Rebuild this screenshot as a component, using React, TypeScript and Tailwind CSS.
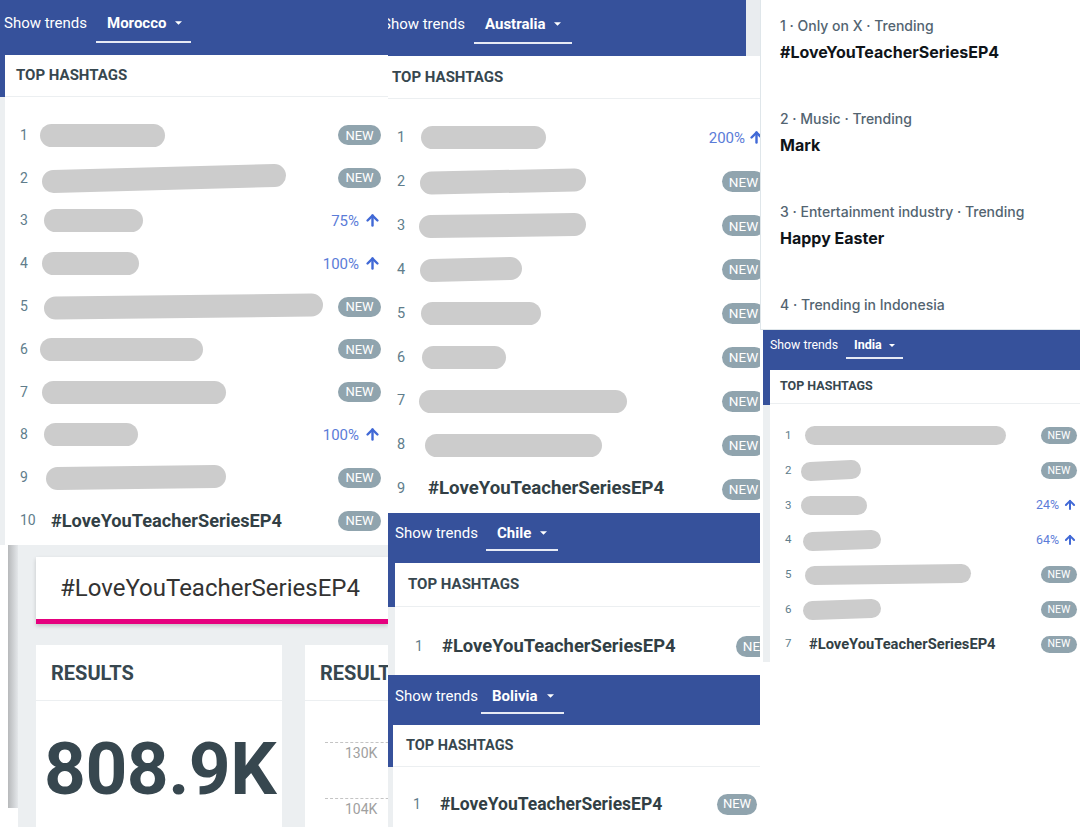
import { ArrowUp } from 'lucide-react';

type Item = { bar?: [number, number, number?]; tag?: string; pct?: string };

type RowCls = {
  row: string;
  num: string;
  tag: string;
  badge: string;
  pct: string;
  arrow: number;
  barH: number;
};

const TAG = '#LoveYouTeacherSeriesEP4';

const morocco: Item[] = [
  { bar: [-11, 125] },
  { bar: [-9, 244, 6] },
  { bar: [-7, 99], pct: '75%' },
  { bar: [-9, 97], pct: '100%' },
  { bar: [-7, 279, 3] },
  { bar: [-11, 163] },
  { bar: [-9, 184] },
  { bar: [-7, 94], pct: '100%' },
  { bar: [-5, 180, 2] },
  { tag: TAG },
];

const australia: Item[] = [
  { bar: [-7, 125], pct: '200%' },
  { bar: [-8, 166, 3] },
  { bar: [-9, 167, 2] },
  { bar: [-8, 102, 2] },
  { bar: [-7, 120] },
  { bar: [-6, 84] },
  { bar: [-9, 208] },
  { bar: [-3, 177] },
  { tag: TAG },
];

const india: Item[] = [
  { bar: [-4, 201] },
  { bar: [-8, 60, 2] },
  { bar: [-8, 66], pct: '24%' },
  { bar: [-6, 78, 2], pct: '64%' },
  { bar: [-4, 166, 2] },
  { bar: [-6, 78, 2] },
  { tag: TAG },
];

const xTrends = [
  { cat: '1 · Only on X · Trending', name: TAG },
  { cat: '2 · Music · Trending', name: 'Mark' },
  { cat: '3 · Entertainment industry · Trending', name: 'Happy Easter' },
  { cat: '4 · Trending in Indonesia' },
];

const lgMorocco: RowCls = {
  row: 'h-[42.8px] pl-[15px] pr-[7px]',
  num: 'w-[31px] text-[14px]',
  tag: 'text-[18.2px]',
  badge: 'h-[20px] w-[43px] text-[13px]',
  pct: 'text-[15px] gap-[5px]',
  arrow: 17,
  barH: 23,
};

const lgAustralia: RowCls = {
  row: 'h-[43.9px] pl-[9px]',
  num: 'w-[31px] text-[14.5px]',
  tag: 'text-[18.6px]',
  badge: 'h-[21px] w-[43px] text-[13.5px]',
  pct: 'text-[15px] gap-[3px]',
  arrow: 17,
  barH: 23,
};

const mdChile: RowCls = {
  row: 'h-[44px] pl-[20px]',
  num: 'w-[27px] text-[14px]',
  tag: 'text-[18.4px]',
  badge: 'h-[21px] w-[43px] text-[13.5px]',
  pct: 'text-[15px]',
  arrow: 17,
  barH: 23,
};

const mdBolivia: RowCls = {
  row: 'h-[44px] pl-[20px] pr-[3px]',
  num: 'w-[27px] text-[14px]',
  tag: 'text-[17.5px]',
  badge: 'h-[21px] w-[40px] text-[13px]',
  pct: 'text-[15px]',
  arrow: 17,
  barH: 23,
};

const smIndia: RowCls = {
  row: 'h-[34.7px] pl-[15px] pr-[3px]',
  num: 'w-[24px] text-[11.5px]',
  tag: 'text-[14.7px]',
  badge: 'h-[17px] w-[36px] text-[10.5px]',
  pct: 'text-[12.4px] gap-[4px]',
  arrow: 14,
  barH: 19,
};

function Caret({ className = '' }: { className?: string }) {
  return (
    <svg viewBox="0 0 8 4" className={className}>
      <path d="M0 0h8L4 4z" fill="currentColor" />
    </svg>
  );
}

// redaction scribble drawn over the hashtag name
function Bar({ x, w, tilt = 0, h }: { x: number; w: number; tilt?: number; h: number }) {
  const H = h + 8;
  return (
    <svg width={w} height={H} style={{ marginLeft: x }} className="shrink-0 overflow-visible">
      <line
        x1={h / 2}
        y1={H / 2 + tilt / 2}
        x2={w - h / 2}
        y2={H / 2 - tilt / 2}
        stroke="#cccccc"
        strokeWidth={h}
        strokeLinecap="round"
      />
    </svg>
  );
}

function ShowTrends({
  country,
  wrap,
  label,
  dd,
  caret,
}: {
  country: string;
  wrap: string;
  label: string;
  dd: string;
  caret: string;
}) {
  return (
    <div className={`flex shrink-0 items-start bg-[#36519b] text-white ${wrap}`}>
      <span className={`whitespace-nowrap ${label}`}>Show trends</span>
      <span className={`flex items-center whitespace-nowrap border-b-2 border-[#e6eaf5] font-bold ${dd}`}>
        {country}
        <Caret className={caret} />
      </span>
    </div>
  );
}

function CardTitle({ cls }: { cls: string }) {
  return (
    <div className={`flex items-center border-b border-[#eceff1] font-bold text-[#37474f] ${cls}`}>
      TOP HASHTAGS
    </div>
  );
}

function TrendRow({ n, item, c }: { n: number; item: Item; c: RowCls }) {
  return (
    <div className={`flex items-center ${c.row}`}>
      <span className={`shrink-0 text-[#607d8b] ${c.num}`}>{n}</span>
      <div className="flex min-w-0 flex-1 items-center">
        {item.tag ? (
          <span className={`whitespace-nowrap font-bold text-[#323f45] ${c.tag}`}>{item.tag}</span>
        ) : item.bar ? (
          <Bar x={item.bar[0]} w={item.bar[1]} tilt={item.bar[2]} h={c.barH} />
        ) : null}
      </div>
      {item.pct ? (
        <span className={`flex shrink-0 items-center text-[#5b7cd8] ${c.pct}`}>
          {item.pct}
          <ArrowUp size={c.arrow} strokeWidth={3.4} className="text-[#4169d6]" />
        </span>
      ) : (
        <span className={`flex shrink-0 items-center justify-center rounded-full bg-[#90a4ae] text-white ${c.badge}`}>
          NEW
        </span>
      )}
    </div>
  );
}

function Results() {
  return (
    <div className="flex h-[282px] shrink-0 bg-white">
      <div className="ml-[8px] h-[263px] w-[10px] shrink-0 bg-linear-to-r from-[#b7b9bb] to-[#e4e7ea]" />
      <div className="min-w-0 flex-1 bg-[#eceff1] pl-[18px] pt-[12px]">
        <div className="flex h-[67px] items-center border-b-[5px] border-[#e5007e] bg-white pl-[24px] shadow-[0_2px_4px_rgba(0,0,0,0.18)]">
          <span className="whitespace-nowrap text-[24px] text-[#333333]">{TAG}</span>
        </div>
        <div className="mt-[21px] flex gap-[23px]">
          <div className="h-[200px] w-[246px] shrink-0 bg-white">
            <div className="flex h-[56px] items-center border-b border-[#eceff1] pl-[15px] text-[20px] font-bold text-[#37474f]">
              RESULTS
            </div>
            <div className="pl-[8px] pt-[32px] text-[73px] font-bold leading-none tracking-[-0.5px] text-[#37474f]">
              808.9K
            </div>
          </div>
          <div className="h-[200px] w-[200px] shrink-0 bg-white">
            <div className="flex h-[56px] items-center border-b border-[#eceff1] pl-[15px] text-[20px] font-bold text-[#37474f]">
              RESULTS
            </div>
            <div className="pl-[20px] pt-[41px] text-[14px] leading-[16px] text-[#a0a0a0]">
              <div className="border-t border-dashed border-[#c4c4c4]" />
              <div className="mt-[2px] pl-[20px]">130K</div>
              <div className="mt-[37px] border-t border-dashed border-[#c4c4c4]" />
              <div className="mt-[2px] pl-[20px]">104K</div>
            </div>
          </div>
        </div>
      </div>
    </div>
  );
}

export default function App() {
  return (
    <div className="grid h-[827px] w-[1080px] grid-cols-[388px_372px_320px] overflow-hidden bg-white [font-family:Roboto,sans-serif]">
      {/* column 1 */}
      <div className="flex flex-col overflow-hidden">
        <div className="h-[545px] shrink-0 overflow-hidden bg-[linear-gradient(#36519b_97px,#eceff1_97px)]">
          <ShowTrends
            country="Morocco"
            wrap="h-[55px] pt-[13px] pl-[4px]"
            label="text-[15px] leading-[20px]"
            dd="ml-[9px] gap-[9px] pl-[11px] pr-[9px] pb-[8px] text-[15px] leading-[20px]"
            caret="h-[4px] w-[7px]"
          />
          <div className="ml-[5px] h-[490px] bg-white">
            <CardTitle cls="h-[42px] pl-[11px] text-[15px]" />
            <div className="pt-[17px]">
              {morocco.map((it, i) => (
                <TrendRow key={i} n={i + 1} item={it} c={lgMorocco} />
              ))}
            </div>
          </div>
        </div>
        <Results />
      </div>

      {/* column 2 */}
      <div className="flex flex-col overflow-hidden">
        <div className="h-[513px] shrink-0 bg-[#e9ecef]">
          <ShowTrends
            country="Australia"
            wrap="h-[56px] pt-[14px] -ml-[6px] mr-[14px]"
            label="text-[15px] leading-[20px]"
            dd="ml-[9px] gap-[9px] pl-[11px] pr-[11px] pb-[8px] text-[15px] leading-[20px]"
            caret="h-[4px] w-[7px]"
          />
          <div className="-mr-[5px] h-[457px] bg-white">
            <CardTitle cls="h-[43px] pl-[4px] text-[15px]" />
            <div className="pt-[17px]">
              {australia.map((it, i) => (
                <TrendRow key={i} n={i + 1} item={it} c={lgAustralia} />
              ))}
            </div>
          </div>
        </div>

        <div className="h-[162px] shrink-0 bg-[linear-gradient(#36519b_94px,#eceff1_94px)]">
          <ShowTrends
            country="Chile"
            wrap="h-[50px] pt-[10px] pl-[7px]"
            label="text-[15px] leading-[20px]"
            dd="ml-[8px] gap-[9px] pl-[11px] pr-[11px] pb-[6px] text-[15px] leading-[20px]"
            caret="h-[4px] w-[7px]"
          />
          <div className="ml-[7px] -mr-[19px] h-[112px] bg-white">
            <CardTitle cls="h-[44px] pl-[13px] text-[15px]" />
            <div className="pt-[17px]">
              <TrendRow n={1} item={{ tag: TAG }} c={mdChile} />
            </div>
          </div>
        </div>

        <div className="h-[152px] shrink-0 bg-[linear-gradient(#36519b_92px,#eceff1_92px)]">
          <ShowTrends
            country="Bolivia"
            wrap="h-[50px] pt-[11px] pl-[7px]"
            label="text-[15px] leading-[20px]"
            dd="ml-[3px] gap-[9px] pl-[11px] pr-[10px] pb-[6px] text-[15px] leading-[20px]"
            caret="h-[4px] w-[7px]"
          />
          <div className="ml-[5px] h-[102px] bg-white">
            <CardTitle cls="h-[42px] pl-[13px] text-[14.5px]" />
            <div className="pt-[15px]">
              <TrendRow n={1} item={{ tag: TAG }} c={mdBolivia} />
            </div>
          </div>
        </div>
      </div>

      {/* column 3 */}
      <div className="flex flex-col overflow-hidden">
        <div className="h-[330px] shrink-0 overflow-hidden border-b border-l border-[#dfe6ea] bg-white pl-[19px] [font-family:Inter,sans-serif]">
          {xTrends.map((t) => (
            <div key={t.cat} className="h-[93px] pt-[16px]">
              <div className="whitespace-nowrap text-[14px] font-medium leading-[20px] text-[#536471]">{t.cat}</div>
              {t.name && (
                <div className="mt-[5px] whitespace-nowrap text-[16px] font-bold leading-[22px] text-[#0f1419]">
                  {t.name}
                </div>
              )}
            </div>
          ))}
        </div>

        <div className="ml-[3px] h-[332px] shrink-0 bg-[linear-gradient(#36519b_75px,#eceff1_75px)]">
          <ShowTrends
            country="India"
            wrap="h-[40px] pt-[7px] pl-[7px]"
            label="text-[12.3px] leading-[16px]"
            dd="ml-[8px] gap-[7px] pl-[8px] pr-[8px] pb-[4px] text-[12.5px] leading-[16px]"
            caret="h-[3px] w-[6px]"
          />
          <div className="ml-[7px] h-[292px] bg-white">
            <CardTitle cls="h-[34px] pl-[10px] text-[12.5px]" />
            <div className="pt-[14.6px]">
              {india.map((it, i) => (
                <TrendRow key={i} n={i + 1} item={it} c={smIndia} />
              ))}
            </div>
          </div>
        </div>
      </div>
    </div>
  );
}
